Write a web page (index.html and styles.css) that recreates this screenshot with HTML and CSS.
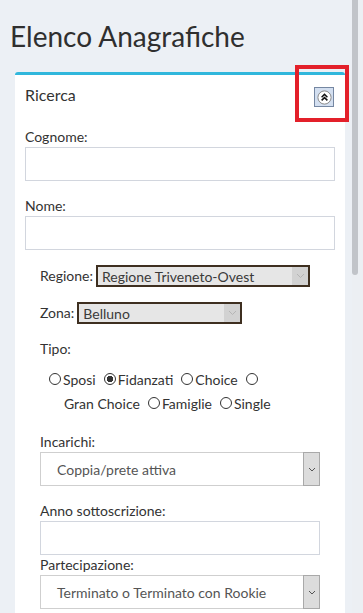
FILE: index.html
```html
<!DOCTYPE html>
<html lang="it">
<head>
<meta charset="utf-8">
<title>Elenco Anagrafiche</title>
<link rel="stylesheet" href="styles.css">
</head>
<body>
<div class="app">
  <div class="page">
    <h1 class="page-title">Elenco Anagrafiche</h1>
    <div class="box">
      <div class="box-header">
        <h3 class="box-title">Ricerca</h3>
        <button class="collapse-btn" type="button" aria-label="Comprimi">
          <svg width="15" height="15" viewBox="0 0 15 15">
            <circle cx="7.5" cy="7.5" r="6.6" fill="#fff" stroke="#8a8a8a" stroke-width="1"/>
            <path d="M4.6 7.2 L7.5 4.4 L10.4 7.2" fill="none" stroke="#111" stroke-width="1.5"/>
            <path d="M4.6 10.4 L7.5 7.6 L10.4 10.4" fill="none" stroke="#111" stroke-width="1.5"/>
          </svg>
        </button>
      </div>
      <div class="box-body">
        <div class="field">
          <label class="lbl">Cognome:</label>
          <div class="input"></div>
        </div>
        <div class="field">
          <label class="lbl">Nome:</label>
          <div class="input"></div>
        </div>
        <div class="inner">
          <div class="inline-row">
            <span class="lbl">Regione:</span>
            <div class="dsel dsel-regione">
              <span class="dsel-text">Regione Triveneto-Ovest</span>
              <span class="dsel-arrow"><svg width="9" height="6" viewBox="0 0 9 6"><path d="M1 1 L4.5 4.5 L8 1" fill="none" stroke="#b5b5b5" stroke-width="1"/></svg></span>
            </div>
          </div>
          <div class="inline-row">
            <span class="lbl">Zona:</span>
            <div class="dsel dsel-zona">
              <span class="dsel-text">Belluno</span>
              <span class="dsel-arrow"><svg width="9" height="6" viewBox="0 0 9 6"><path d="M1 1 L4.5 4.5 L8 1" fill="none" stroke="#b5b5b5" stroke-width="1"/></svg></span>
            </div>
          </div>
          <div class="tipo">
            <div class="lbl tipo-lbl">Tipo:</div>
            <div class="radio-row row1">
              <input class="rd" type="radio" name="tipo"><span class="rl">Sposi</span>
              <input class="rd" type="radio" name="tipo" checked><span class="rl">Fidanzati</span>
              <input class="rd" type="radio" name="tipo"><span class="rl">Choice</span>
              <input class="rd" type="radio" name="tipo">
            </div>
            <div class="radio-row row2">
              <span class="rl">Gran Choice</span>
              <input class="rd" type="radio" name="tipo"><span class="rl">Famiglie</span>
              <input class="rd" type="radio" name="tipo"><span class="rl">Single</span>
            </div>
          </div>
          <div class="field">
            <label class="lbl">Incarichi:</label>
            <div class="sel">
              <span class="sel-text">Coppia/prete attiva</span>
              <span class="sel-arrow"><svg width="8" height="5" viewBox="0 0 8 5"><path d="M1 1 L4 4 L7 1" fill="none" stroke="#555" stroke-width="1"/></svg></span>
            </div>
          </div>
          <div class="field tight">
            <label class="lbl">Anno sottoscrizione:</label>
            <div class="input"></div>
          </div>
          <div class="field">
            <label class="lbl">Partecipazione:</label>
            <div class="sel">
              <span class="sel-text">Terminato o Terminato con Rookie</span>
              <span class="sel-arrow"><svg width="8" height="5" viewBox="0 0 8 5"><path d="M1 1 L4 4 L7 1" fill="none" stroke="#555" stroke-width="1"/></svg></span>
            </div>
          </div>
        </div>
      </div>
    </div>
  </div>
  <div class="scrollbar" aria-hidden="true">
    <div class="scroll-thumb"></div>
  </div>
</div>
<div class="highlight"></div>
</body>
</html>
```

FILE: styles.css
```css
html, body {
  margin: 0;
  padding: 0;
  background: #ecf0f5;
}
body {
  font-family: Lato, "Noto Sans", sans-serif;
  color: #333;
  overflow: hidden;
}
.app {
  display: flex;
  width: 363px;
  height: 613px;
  overflow: hidden;
}
.page {
  flex: 1;
  min-width: 0;
  padding-top: 19px;
}
.scrollbar {
  width: 11px;
  height: 613px;
  background: #eceff3;
  flex-shrink: 0;
}
.scroll-thumb {
  width: 6px;
  height: 275px;
  background: #c1c4c9;
  border-radius: 0 0 3px 3px;
}
.page-title {
  margin: 0 0 0 10px;
  font-size: 28px;
  line-height: 34px;
  font-weight: 400;
  color: #2f2f2f;
}
.box {
  margin: 19px 7px 0 15px;
  background: #fff;
  border-top: 3px solid #31b7dc;
  border-radius: 3px 3px 0 0;
}
.box-header {
  display: flex;
  align-items: flex-start;
  justify-content: space-between;
  height: 52px;
  box-sizing: border-box;
  padding: 10px 11px 0 10px;
}
.box-title {
  margin: 0;
  font-size: 16px;
  line-height: 20px;
  font-weight: 400;
  color: #333;
}
.collapse-btn {
  width: 20px;
  height: 20px;
  padding: 0;
  margin-top: 2px;
  border: 1px solid #7587a2;
  background: #d3dff0;
  display: flex;
  align-items: center;
  justify-content: center;
  box-sizing: border-box;
}
.box-body {
  padding: 0 10px 10px 10px;
}
.lbl {
  display: block;
  font-size: 14px;
  line-height: 20px;
  color: #333;
}
.field {
  margin-bottom: 15px;
}
.field.tight {
  margin-bottom: 0;
}
.input {
  height: 34px;
  box-sizing: border-box;
  border: 1px solid #d2d6de;
  background: #fff;
}
.inner {
  padding: 0 15px;
}
.inline-row {
  display: flex;
  align-items: center;
  gap: 3px;
  margin-bottom: 15px;
}
.dsel {
  display: flex;
  align-items: center;
  height: 22px;
  box-sizing: border-box;
  border: 2px solid #3e2f20;
  background: #e6e6e6;
}
.dsel-regione { width: 214px; }
.dsel-zona { width: 165px; }
.dsel-text {
  flex: 1;
  padding-left: 4px;
  font-size: 14px;
  color: #3a3a3a;
  white-space: nowrap;
}
.dsel-arrow {
  width: 16px;
  height: 18px;
  background: #d2d2d2;
  display: flex;
  align-items: center;
  justify-content: center;
}
.tipo {
  margin-bottom: 17px;
}
.tipo-lbl {
  margin-bottom: 8px;
}
.radio-row {
  display: flex;
  align-items: center;
  height: 24px;
  font-size: 14px;
}
.row1 { padding-left: 9px; }
.row2 { padding-left: 24px; }
.rd {
  appearance: none;
  -webkit-appearance: none;
  width: 12px;
  height: 12px;
  margin: 0 2px 0 0;
  border: 1px solid #333;
  border-radius: 50%;
  background: #fff;
  box-sizing: border-box;
}
.rd:checked {
  background: radial-gradient(circle, #333 0 3px, #fff 3.5px);
}
.rl {
  margin-right: 8px;
  color: #333;
}
.sel {
  display: flex;
  align-items: stretch;
  height: 34px;
  box-sizing: border-box;
  border: 1px solid #cfcfcf;
  background: #fff;
}
.sel-text {
  flex: 1;
  display: flex;
  align-items: center;
  padding-left: 16px;
  font-size: 14px;
  color: #555;
}
.sel-arrow {
  width: 17px;
  box-sizing: border-box;
  border: 1px solid #a9a9a9;
  margin: -1px -1px -1px 0;
  background: #dcdcdc;
  display: flex;
  align-items: center;
  justify-content: center;
}
.highlight {
  position: absolute;
  left: 295px;
  top: 65px;
  width: 54px;
  height: 57px;
  box-sizing: border-box;
  border: 4px solid #e3202a;
  pointer-events: none;
}
```
